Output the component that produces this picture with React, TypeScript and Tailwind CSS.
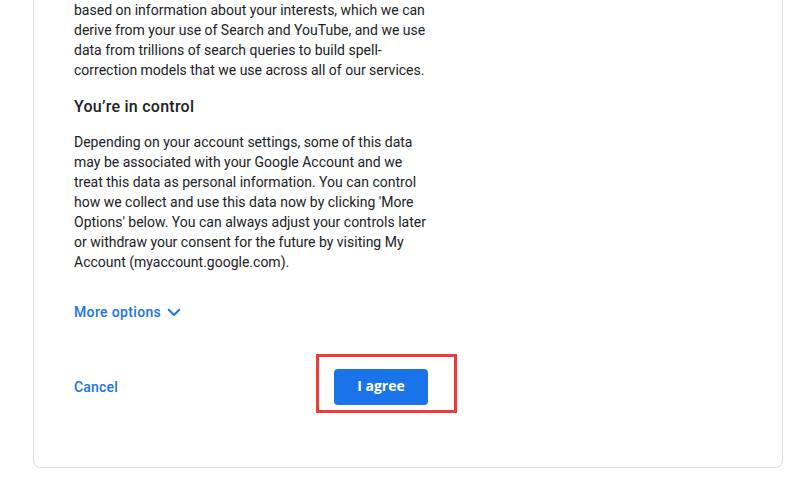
import React from "react";

export default function App() {
  return (
    <div className="w-[792px] h-[477px] bg-white overflow-hidden relative" style={{ fontFamily: "Roboto, 'Liberation Sans', sans-serif" }}>
      <div className="ml-[33px] w-[750px] h-[468px] border-x border-b border-[#dadce0] rounded-b-[8px] pl-[40px]">
        <div className="w-[356px] text-[14px] leading-[20px] text-[#202124]">
          <p>
            based on information about your interests, which we can derive from your use of Search and YouTube, and we use data from trillions of search queries to build spell-correction models that we use across all of our services.
          </p>
          <h2 className="mt-[15px] mb-[13px] text-[16px] leading-[24px] font-medium tracking-[0.25px] text-[#202124]">
            You’re in control
          </h2>
          <p>
            Depending on your account settings, some of this data may be associated with your Google Account and we treat this data as personal information. You can control how we collect and use this data now by clicking 'More Options' below. You can always adjust your controls later or withdraw your consent for the future by visiting My Account (myaccount.google.com).
          </p>
          <div className="mt-[30px] flex items-center gap-[4px] text-[#1a73e8] text-[14px] leading-[20px] font-medium tracking-[0.35px]">
            <span>More options</span>
            <svg width="18" height="18" viewBox="0 0 24 24" fill="none" stroke="#1a73e8" strokeWidth="2.6" strokeLinecap="round" strokeLinejoin="round">
              <path d="M5 9l7 7 7-7" />
            </svg>
          </div>
          <div className="mt-[47px] flex items-center justify-between w-[354px]">
            <span className="text-[#1a73e8] text-[14px] font-medium tracking-[0.2px]">Cancel</span>
            <div className="relative">
              <button className="w-[94px] h-[36px] rounded-[4px] bg-[#1a73e8] text-white text-[14px] font-bold leading-[20px] pb-[2px]" style={{ fontFamily: "'Open Sans', Roboto, sans-serif" }}>
                I agree
              </button>
              <div className="absolute left-[-18px] top-[-15px] w-[141px] h-[59px] border-[3px] border-[#ef3b3b]" />
            </div>
          </div>
        </div>
      </div>
    </div>
  );
}
